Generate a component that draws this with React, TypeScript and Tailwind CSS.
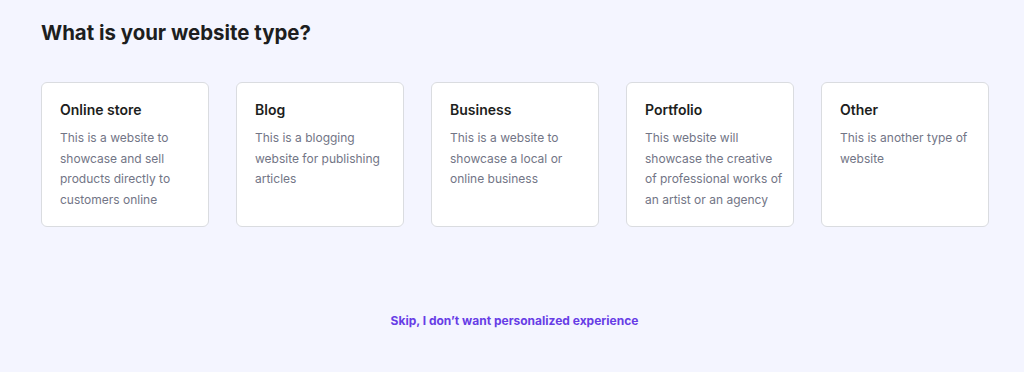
import React from "react";

const cards = [
  { title: "Online store", desc: "This is a website to showcase and sell products directly to customers online" },
  { title: "Blog", desc: "This is a blogging website for publishing articles" },
  { title: "Business", desc: "This is a website to showcase a local or online business" },
  { title: "Portfolio", desc: "This website will showcase the creative of professional works of an artist or an agency" },
  { title: "Other", desc: "This is another type of website" },
];

export default function App() {
  return (
    <div
      className="w-[1024px] h-[372px] bg-[#f4f5ff] overflow-hidden"
      style={{ fontFamily: "Inter, 'Noto Sans', sans-serif" }}
    >
      <div className="pl-[41px] w-[988px] pt-[20px]">
        <h1 className="text-[20.4px] leading-[26px] font-bold text-[#1d1e20]">
          What is your website type?
        </h1>
        <div className="mt-[36px] flex gap-[27px]">
          {cards.map((c) => (
            <div
              key={c.title}
              className="w-[168px] h-[145px] shrink-0 bg-white rounded-[6px] border border-[#dadce0] pl-[18px] pr-[9px] pt-[17px]"
            >
              <div className="text-[14px] leading-[20px] font-semibold text-[#1d1e20]">{c.title}</div>
              <p className="mt-[8px] text-[12px] leading-[20.5px] text-[#727586]">{c.desc}</p>
            </div>
          ))}
        </div>
        <div className="mt-[86px] flex justify-center">
          <button className="text-[12px] leading-[16px] font-bold text-[#673de6]">
            Skip, I don’t want personalized experience
          </button>
        </div>
      </div>
    </div>
  );
}
